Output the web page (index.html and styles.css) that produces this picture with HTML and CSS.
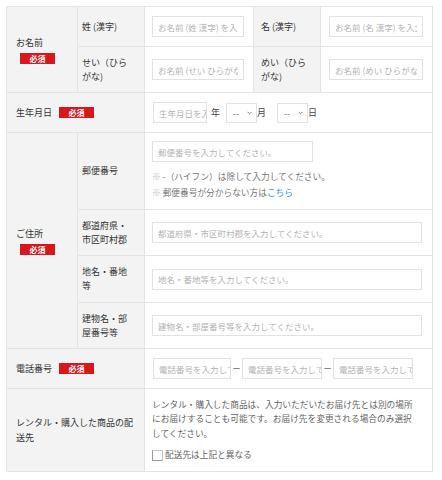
FILE: index.html
```html
<!DOCTYPE html>
<html lang="ja">
<head>
<meta charset="utf-8">
<title>お客様情報入力</title>
<link rel="stylesheet" href="styles.css">
</head>
<body>
<form class="form-grid">
  <div class="cell label main stack span-r2">
    <span class="label-text">お名前</span>
    <span class="badge badge-under">必須</span>
  </div>
  <div class="cell label sub">姓 (漢字)</div>
  <div class="cell field name-a"><input class="text" type="text" placeholder="お名前 (姓 漢字) を入力してください。"></div>
  <div class="cell label sub2">名 (漢字)</div>
  <div class="cell field name-b"><input class="text" type="text" placeholder="お名前 (名 漢字) を入力してください。"></div>

  <div class="cell label sub">せい（ひら<br>がな)</div>
  <div class="cell field name-a"><input class="text" type="text" placeholder="お名前 (せい ひらがな) を入力してください。"></div>
  <div class="cell label sub2">めい（ひら<br>がな)</div>
  <div class="cell field name-b"><input class="text" type="text" placeholder="お名前 (めい ひらがな) を入力してください。"></div>

  <div class="cell label main inline span-c2">
    <span class="label-text">生年月日</span>
    <span class="badge badge-side">必須</span>
  </div>
  <div class="cell field wide birth">
    <input class="text birth-year" type="text" placeholder="生年月日を入力してください。">
    <span class="unit unit-year">年</span>
    <span class="select">
      <select class="select-el"><option>--</option></select>
      <svg class="chev" width="5" height="4" viewBox="0 0 5 4"><polyline points="0.5,0.8 2.5,2.8 4.5,0.8" fill="none" stroke="#888" stroke-width="1"/></svg>
    </span>
    <span class="unit">月</span>
    <span class="select select-day">
      <select class="select-el"><option>--</option></select>
      <svg class="chev" width="5" height="4" viewBox="0 0 5 4"><polyline points="0.5,0.8 2.5,2.8 4.5,0.8" fill="none" stroke="#888" stroke-width="1"/></svg>
    </span>
    <span class="unit">日</span>
  </div>

  <div class="cell label main stack span-r4">
    <span class="label-text">ご住所</span>
    <span class="badge badge-under">必須</span>
  </div>
  <div class="cell label sub">郵便番号</div>
  <div class="cell field wide postal">
    <input class="text postal-input" type="text" placeholder="郵便番号を入力してください。">
    <p class="note">
      <span class="mark">※</span> -（ハイフン）は除して入力してください。<br>
      <span class="mark">※</span> 郵便番号が分からない方は<a class="link" href="#">こちら</a>
    </p>
  </div>

  <div class="cell label sub">都道府県・<br>市区町村郡</div>
  <div class="cell field wide addr"><input class="text" type="text" placeholder="都道府県・市区町村郡を入力してください。"></div>

  <div class="cell label sub">地名・番地<br>等</div>
  <div class="cell field wide addr"><input class="text" type="text" placeholder="地名・番地等を入力してください。"></div>

  <div class="cell label sub">建物名・部<br>屋番号等</div>
  <div class="cell field wide addr"><input class="text" type="text" placeholder="建物名・部屋番号等を入力してください。"></div>

  <div class="cell label main inline span-c2">
    <span class="label-text">電話番号</span>
    <span class="badge badge-side">必須</span>
  </div>
  <div class="cell field wide phone">
    <input class="text tel tel-1" type="text" placeholder="電話番号を入力してください。">
    <span class="dash">－</span>
    <input class="text tel tel-2" type="text" placeholder="電話番号を入力してください。">
    <span class="dash">－</span>
    <input class="text tel tel-3" type="text" placeholder="電話番号を入力してください。">
  </div>

  <div class="cell label main span-c2 long">レンタル・購入した商品の配<br>送先</div>
  <div class="cell field wide delivery">
    <p class="desc">レンタル・購入した商品は、入力いただいたお届け先とは別の場所<br>にお届けすることも可能です。お届け先を変更される場合のみ選択<br>してください。</p>
    <label class="check"><input class="check-box" type="checkbox"><span>配送先は上記と異なる</span></label>
  </div>
</form>
</body>
</html>
```

FILE: styles.css
```css
* {
  box-sizing: border-box;
}

html, body {
  background: #ffffff;
}

body {
  margin: 0;
  padding: 6px;
  font-family: "Noto Sans CJK JP", "Noto Sans", sans-serif;
  font-size: 9px;
  color: #333333;
}

.form-grid {
  display: grid;
  grid-template-columns: 71px 67px 109px 67px 112px;
  grid-template-rows: 40px 46px 40px 77px 46px 47px 46px 40px 83px;
  width: 427px;
  border-top: 1px solid #e4e4e4;
  border-left: 1px solid #e4e4e4;
}

.cell {
  display: flex;
  align-items: center;
  border-right: 1px solid #e4e4e4;
  border-bottom: 1px solid #e4e4e4;
  line-height: 14px;
  min-width: 0;
}

.label {
  background: #f3f3f3;
  color: #333333;
}

.main {
  padding-left: 9px;
}

.sub {
  padding-left: 4px;
}

.sub2 {
  padding-left: 7px;
}

.span-r2 {
  grid-row: span 2;
}

.span-r4 {
  grid-row: span 4;
}

.span-c2 {
  grid-column: span 2;
}

.wide {
  grid-column: span 3;
}

.stack {
  flex-direction: column;
  align-items: flex-start;
  justify-content: center;
}

.inline {
  gap: 7px;
}

.long {
  line-height: 15px;
}

.badge {
  display: inline-block;
  width: 35px;
  height: 11px;
  background: #d8161d;
  color: #ffffff;
  font-size: 8px;
  font-weight: bold;
  line-height: 11px;
  text-align: center;
}

.badge-under {
  margin-top: 3px;
  margin-left: 4px;
}

.field {
  background: #ffffff;
}

.name-a {
  padding: 0 9px 0 7px;
}

.name-b {
  padding: 0 9px 0 8px;
}

.text {
  display: block;
  width: 100%;
  height: 21px;
  margin: 0;
  padding: 0 5px;
  border: 1px solid #e2e2e2;
  background: #ffffff;
  font-family: "Noto Sans CJK JP", "Noto Sans", sans-serif;
  font-size: 8.5px;
  color: #555555;
  outline: none;
}

.text::placeholder {
  color: #b3b3b3;
}

.birth {
  padding-left: 8px;
}

.birth-year {
  width: 54px;
  flex: none;
  padding-right: 0;
}

.unit {
  color: #444444;
}

.unit-year {
  margin: 0 6px 0 4px;
}

.select {
  position: relative;
  display: inline-block;
  width: 31px;
  height: 20px;
}

.select-day {
  margin-left: 11px;
}

.select-el {
  appearance: none;
  -webkit-appearance: none;
  width: 100%;
  height: 100%;
  margin: 0;
  padding: 0 0 0 6px;
  border: 1px solid #e2e2e2;
  border-radius: 0;
  background: #ffffff;
  font-family: "Noto Sans CJK JP", "Noto Sans", sans-serif;
  font-size: 8.5px;
  color: #666666;
  outline: none;
}

.chev {
  position: absolute;
  right: 5px;
  top: 8px;
}

.postal {
  flex-direction: column;
  align-items: flex-start;
  justify-content: center;
  padding-left: 7px;
}

.postal-input {
  width: 161px;
}

.note {
  margin: 7px 0 0 0;
  font-size: 8.7px;
  line-height: 16px;
  color: #777777;
}

.mark {
  color: #b9b9b9;
}

.link {
  color: #3b8fd4;
  text-decoration: none;
}

.addr {
  padding: 0 10px 0 7px;
}

.phone {
  padding-left: 8px;
}

.tel {
  flex: none;
  padding-right: 0;
}

.tel-1 {
  width: 78px;
}

.tel-2 {
  width: 80px;
}

.tel-3 {
  width: 80px;
}

.dash {
  width: 11px;
  text-align: center;
  color: #444444;
  font-size: 9px;
}

.delivery {
  flex-direction: column;
  align-items: flex-start;
  justify-content: center;
  padding-left: 7px;
}

.desc {
  margin: 0;
  font-size: 8.7px;
  line-height: 14.5px;
  color: #666666;
  white-space: nowrap;
}

.check {
  display: flex;
  align-items: center;
  margin-top: 7px;
  font-size: 8.7px;
  line-height: 14px;
  color: #666666;
}

.check-box {
  appearance: none;
  -webkit-appearance: none;
  width: 11px;
  height: 11px;
  margin: 0 2px 0 0;
  border: 1px solid #c4c4c4;
  border-left-color: #9a9a9a;
  border-bottom-color: #9a9a9a;
  background: #ffffff;
}
```
